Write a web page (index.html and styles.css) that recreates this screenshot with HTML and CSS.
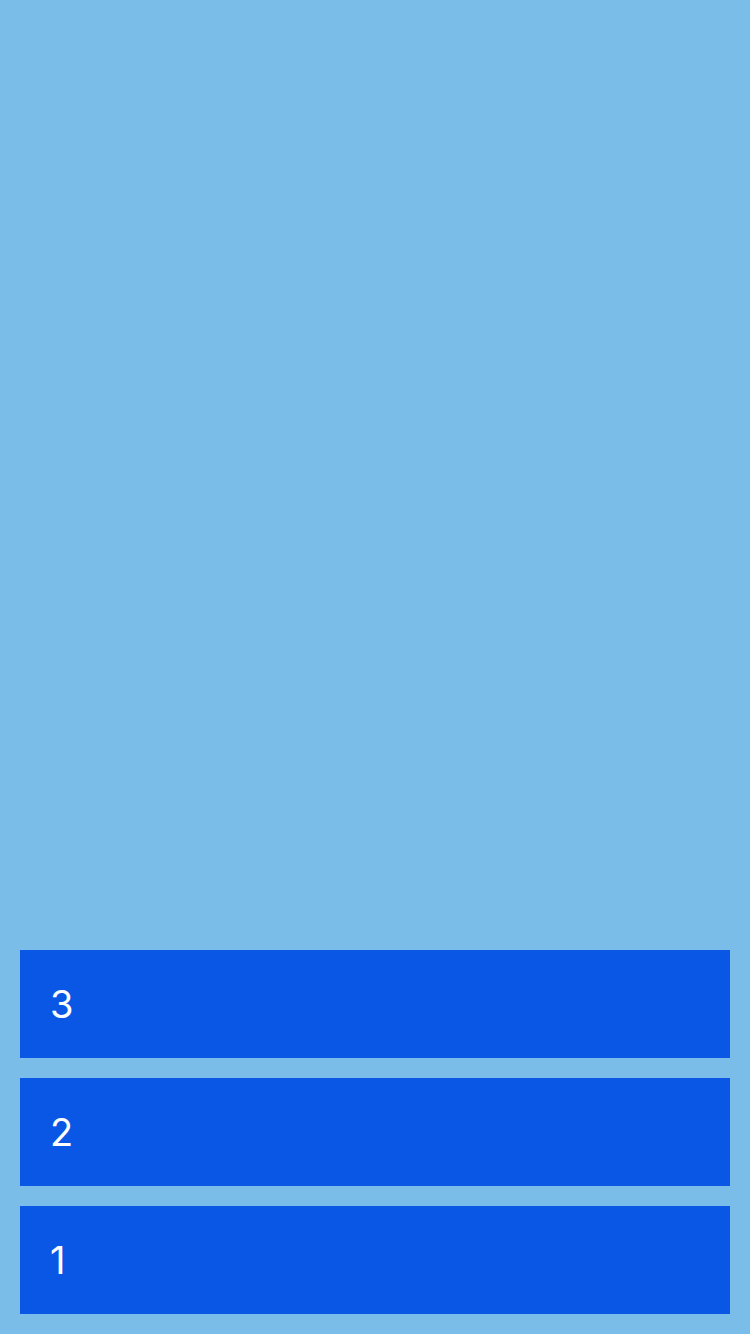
FILE: index.html
```html
<!DOCTYPE html>
<html>
<head>
<meta charset="utf-8">
<link rel="stylesheet" href="styles.css">
</head>
<body>
<div class="page">
  <div class="stack">
    <div class="item"><span class="label">3</span></div>
    <div class="item"><span class="label">2</span></div>
    <div class="item"><span class="label">1</span></div>
  </div>
</div>
</body>
</html>
```
FILE: styles.css
```css
html, body {
  margin: 0;
  padding: 0;
}
body {
  background: #79bde8;
  font-family: Inter, "Noto Sans", sans-serif;
}
.page {
  width: 750px;
  height: 1334px;
  display: flex;
  flex-direction: column;
  justify-content: flex-end;
  box-sizing: border-box;
  padding: 0 20px 20px;
}
.stack {
  display: flex;
  flex-direction: column;
  gap: 20px;
}
.item {
  height: 108px;
  background: #0b57e5;
  display: flex;
  align-items: center;
  padding-left: 30px;
}
.label {
  color: #ffffff;
  font-size: 38px;
  font-weight: 400;
  line-height: 1;
}
```
